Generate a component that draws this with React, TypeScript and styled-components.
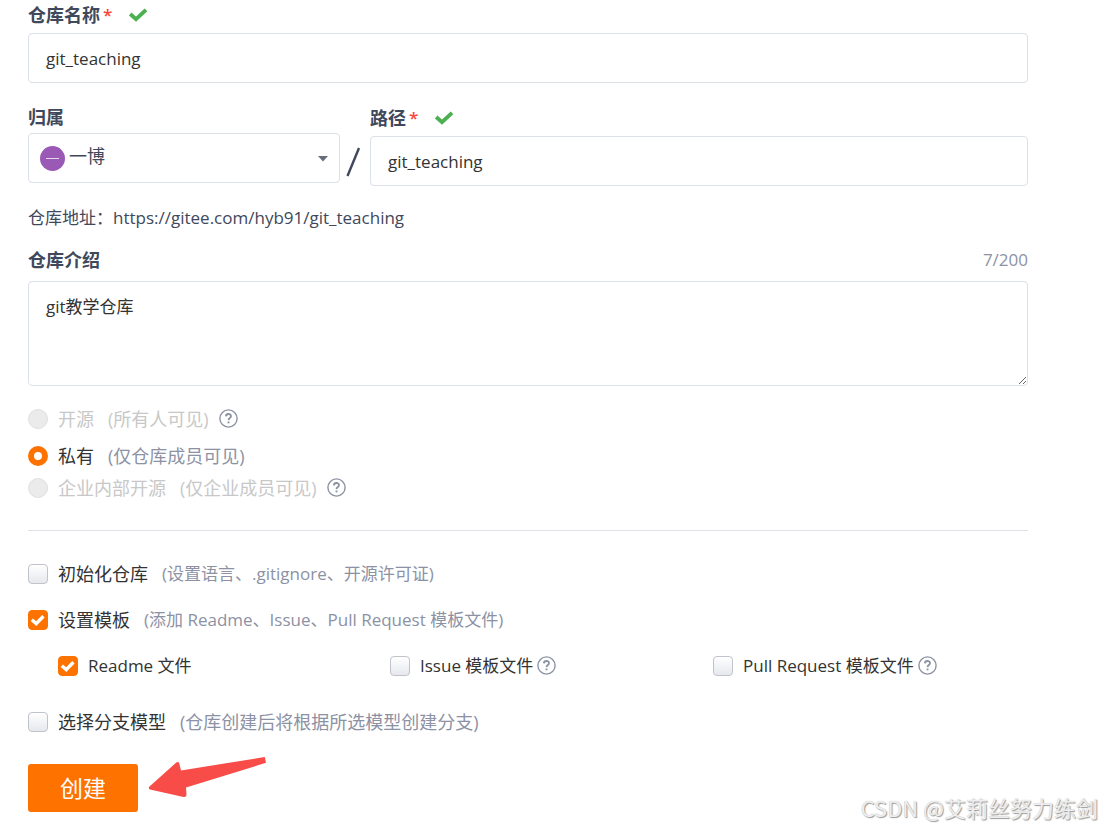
import React from "react";
import styled, { createGlobalStyle, css } from "styled-components";

const INK = "#40485b";
const MUTED = "#8c92a4";
const ORANGE = "#fe7300";

const GlobalStyle = createGlobalStyle`
  *, *::before, *::after { box-sizing: border-box; }
  body {
    margin: 0;
    background: #fff;
    color: #333;
    font-family: "Open Sans", "Noto Sans CJK SC", sans-serif;
    font-size: 17px;
    font-weight: 400;
    line-height: 24px;
  }
  input, select, textarea, button { font: inherit; margin: 0; }
`;

const Form = styled.form`
  padding: 3px 73px 16px 28px;
`;

const Label = styled.label<{ $tall?: boolean }>`
  display: flex;
  align-items: center;
  width: max-content;
  height: ${(p) => (p.$tall ? 25 : 24)}px;
  color: ${INK};
  font-size: 18px;
  font-weight: 700;
`;

const Star = styled.span`
  margin-left: 3px;
  color: #f5473b;
  font-size: 17px;
  font-weight: 600;
`;

const CheckIcon = styled.svg`
  width: 20px;
  height: 14px;
  margin-left: 16px;
`;

const fieldBox = css`
  display: block;
  width: 100%;
  border: 1px solid #dce0e8;
  border-radius: 4px;
  background: #fff;
  color: #333;
  outline: none;
`;

const TextInput = styled.input`
  ${fieldBox}
  height: 50px;
  margin-top: 6px;
  padding: 1px 17px 0;
`;

const TextArea = styled.textarea`
  ${fieldBox}
  height: 105px;
  margin-top: 9px;
  padding: 13px 17px;
  resize: both;
`;

const PathRow = styled.div`
  display: grid;
  grid-template-columns: 312px 30px 1fr;
  margin-top: 22px;
`;

const SelectBox = styled.div`
  position: relative;
  margin-top: 4px;
`;

const Select = styled.select`
  ${fieldBox}
  height: 50px;
  padding: 0 30px 4px 40px;
  appearance: none;
  color: ${INK};
  font-size: 18px;
`;

const Avatar = styled.svg`
  position: absolute;
  left: 12px;
  top: 13px;
  width: 25px;
  height: 25px;
  pointer-events: none;
`;

const Caret = styled.svg`
  position: absolute;
  right: 12px;
  top: 23px;
  width: 10px;
  height: 6px;
  pointer-events: none;
`;

const Slash = styled.svg`
  width: 14px;
  height: 30px;
  margin: 42px 0 0 6px;
`;

const Address = styled.p`
  margin: 20px 0 0;
  color: ${INK};
`;

const LabelRow = styled.div`
  display: flex;
  justify-content: space-between;
  margin-top: 18px;
`;

const Counter = styled.span`
  color: ${MUTED};
`;

const Option = styled.div<{ $gap?: number }>`
  display: flex;
  align-items: center;
  height: 24px;
  margin-top: ${(p) => p.$gap ?? 0}px;
`;

const OptionLabel = styled.label<{ $disabled?: boolean; $mixed?: boolean }>`
  display: flex;
  align-items: center;
  color: ${(p) => (p.$disabled ? "#c8c8c8" : "#333")};
  font-size: ${(p) => (p.$mixed ? 17 : 18)}px;
  white-space: pre;
`;

const Hint = styled.span<{ $disabled?: boolean; $mixed?: boolean }>`
  margin-left: 14px;
  color: ${(p) => (p.$disabled ? "#c8c8c8" : MUTED)};
  font-size: ${(p) => (p.$mixed ? 17 : 18)}px;
`;

const Radio = styled.input`
  appearance: none;
  width: 20px;
  height: 20px;
  margin-right: 10px;
  border: 1px solid #e0e0e0;
  border-radius: 50%;
  background: #ebebeb;
  &:checked {
    border: 6px solid ${ORANGE};
    background: #fff;
  }
`;

const Tick = styled.input`
  appearance: none;
  width: 20px;
  height: 20px;
  margin-right: 10px;
  border: 1px solid #c0c3cb;
  border-radius: 4px;
  background: linear-gradient(#fff, #e6e8ed);
  &:checked {
    border-color: ${ORANGE};
    background: ${ORANGE};
  }
`;

const TickBox = styled.span`
  position: relative;
  display: flex;
`;

const TickMark = styled.svg`
  position: absolute;
  left: 0;
  top: 0;
  width: 20px;
  height: 20px;
  pointer-events: none;
`;

const HelpIcon = styled.svg<{ $gap: number }>`
  width: 19px;
  height: 19px;
  margin: 0 0 2px ${(p) => p.$gap}px;
`;

const Divider = styled.hr`
  height: 1px;
  margin: 30px 0 31px;
  border: 0;
  background: #dfe1e6;
`;

const Templates = styled.div`
  display: grid;
  grid-template-columns: 332fr 323fr 315fr;
  margin: 22px 0 32px;
  padding-left: 30px;
`;

const Actions = styled.div`
  display: flex;
  align-items: center;
  gap: 10px;
  margin-top: 30px;
`;

const Submit = styled.button`
  width: 110px;
  height: 48px;
  padding: 0;
  border: 0;
  border-radius: 3px;
  background: ${ORANGE};
  color: #fff;
  font-size: 23px;
`;

const Arrow = styled.svg`
  width: 120px;
  height: 48px;
  overflow: visible;
`;

const Watermark = styled.div`
  position: absolute;
  right: 3px;
  top: 792px;
  color: #eee;
  font-family: "Noto Sans CJK SC", sans-serif;
  font-size: 22px;
  line-height: 30px;
  text-shadow: 1px 1px 1px #999, 0 0 1px #bbb;
  white-space: nowrap;
`;

const Check = () => (
  <CheckIcon viewBox="0 0 20 14" aria-hidden="true">
    <path d="M2.2 6 L8 11.2 L18 1.8" fill="none" stroke="#4bb050" strokeWidth="3.8" />
  </CheckIcon>
);

const Help = ({ gap }: { gap: number }) => (
  <HelpIcon $gap={gap} viewBox="0 0 19 19" fill="none" stroke={MUTED} aria-hidden="true">
    <circle cx="9.5" cy="9.5" r="8.6" strokeWidth="1.4" />
    <path d="M6.9 7.4 C7 4.2 12 4.3 12 7.2 C12 9 9.6 9.1 9.5 11.1" strokeWidth="1.8" />
    <path d="M9.5 12.5 V14.3" strokeWidth="1.9" />
  </HelpIcon>
);

const Visibility = ({ id, name, hint, gap, disabled, help }: {
  id: string; name: string; hint: string; gap: number; disabled?: boolean; help?: boolean;
}) => (
  <Option $gap={gap}>
    <Radio type="radio" name="visibility" id={id} disabled={disabled} defaultChecked={!disabled} />
    <OptionLabel htmlFor={id} $disabled={disabled}>
      {name}
      <Hint $disabled={disabled}>{hint}</Hint>
    </OptionLabel>
    {help && <Help gap={10} />}
  </Option>
);

const hasLatin = (text: string) => /[a-z]/i.test(text);

const CheckOption = ({ id, name, hint, gap, checked, help }: {
  id: string; name: string; hint?: string; gap?: number; checked?: boolean; help?: boolean;
}) => (
  <Option $gap={gap}>
    <TickBox>
      <Tick type="checkbox" id={id} defaultChecked={checked} />
      {checked && (
        <TickMark viewBox="0 0 20 20" aria-hidden="true">
          <path d="M3.8 9.8 L8.2 13.6 L15.4 6.2" fill="none" stroke="#fff" strokeWidth="3.4" />
        </TickMark>
      )}
    </TickBox>
    <OptionLabel htmlFor={id} $mixed={hasLatin(name)}>
      {name}
      {hint && <Hint $mixed={hasLatin(hint)}>{hint}</Hint>}
    </OptionLabel>
    {help && <Help gap={4} />}
  </Option>
);

export default function App() {
  return (
    <>
      <GlobalStyle />
      <Form onSubmit={(e) => e.preventDefault()}>
        <Label htmlFor="name">仓库名称<Star>*</Star><Check /></Label>
        <TextInput id="name" defaultValue="git_teaching" />

        <PathRow>
          <div>
            <Label htmlFor="owner">归属</Label>
            <SelectBox>
              <Select id="owner"><option>一博</option></Select>
              <Avatar viewBox="0 0 25 25" aria-hidden="true">
                <circle cx="12.5" cy="12.5" r="12.5" fill="#9b59b6" />
                <path d="M6 12.5 H19" stroke="#e6d5ed" />
              </Avatar>
              <Caret viewBox="0 0 10 6" aria-hidden="true">
                <path d="M0 0 H10 L5 5.5 Z" fill="#666d7c" />
              </Caret>
            </SelectBox>
          </div>
          <Slash viewBox="0 0 14 30" aria-hidden="true">
            <path d="M1.5 29 L13 1" stroke={INK} strokeWidth="2.4" />
          </Slash>
          <div>
            <Label htmlFor="path" $tall>路径<Star>*</Star><Check /></Label>
            <TextInput id="path" defaultValue="git_teaching" />
          </div>
        </PathRow>

        <Address>仓库地址：https://gitee.com/hyb91/git_teaching</Address>

        <LabelRow>
          <Label htmlFor="intro">仓库介绍</Label>
          <Counter>7/200</Counter>
        </LabelRow>
        <TextArea id="intro" defaultValue="git教学仓库" />

        <Visibility id="public" name="开源" hint="(所有人可见)" gap={21} disabled help />
        <Visibility id="private" name="私有" hint="(仅仓库成员可见)" gap={13} />
        <Visibility id="internal" name="企业内部开源" hint="(仅企业成员可见)" gap={8} disabled help />

        <Divider />

        <CheckOption id="init" name="初始化仓库" hint="(设置语言、.gitignore、开源许可证)" />
        <CheckOption id="template" name="设置模板" hint="(添加 Readme、Issue、Pull Request 模板文件)" gap={22} checked />
        <Templates>
          <CheckOption id="readme" name="Readme 文件" checked />
          <CheckOption id="issue" name="Issue 模板文件" help />
          <CheckOption id="pull" name="Pull Request 模板文件" help />
        </Templates>
        <CheckOption id="branch" name="选择分支模型" hint="(仓库创建后将根据所选模型创建分支)" />

        <Actions>
          <Submit type="submit">创建</Submit>
          <Arrow viewBox="148 764 120 48" aria-hidden="true">
            <path
              d="M149.5 786.5 L176 762.8 Q178.5 761 179.3 763.5 L181 770.5 L264.8 757 L266 762.8 L186 787.5 L186.5 794.5 Q186.5 797.5 183.5 797 L150 789.5 Q147.8 788.5 149.5 786.5 Z"
              fill="#f84c48"
            />
          </Arrow>
        </Actions>
      </Form>
      <Watermark>CSDN @艾莉丝努力练剑</Watermark>
    </>
  );
}
